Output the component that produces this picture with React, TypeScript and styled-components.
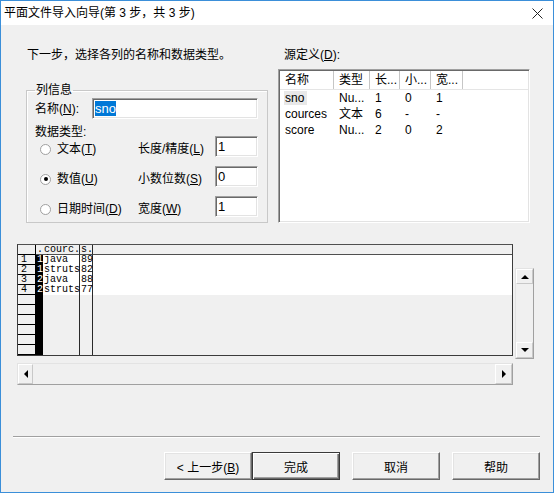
import React from 'react'
import styled, { createGlobalStyle } from 'styled-components'

const GlobalStyle = createGlobalStyle`
  html, body {
    margin: 0;
    padding: 0;
    background: #f0f0f0;
  }
  body {
    font-family: "Liberation Sans", "Noto Sans CJK SC", sans-serif;
    font-size: 12px;
    color: #000;
  }
  * {
    box-sizing: border-box;
  }
`

const Window = styled.div`
  width: 554px;
  height: 493px;
  border: 1px solid #3b8fd9;
  background: #f0f0f0;
  display: flex;
  flex-direction: column;
  overflow: hidden;
`

const TitleBar = styled.div`
  height: 24px;
  flex: none;
  background: #fff;
  display: flex;
  align-items: center;
  justify-content: space-between;
  padding-left: 3px;
`

const Title = styled.span`
  line-height: 16px;
`

const CloseBox = styled.div`
  width: 32px;
  height: 24px;
  display: flex;
  align-items: center;
  justify-content: center;
`

const TopSection = styled.div`
  display: flex;
  padding: 22px 0 0 25px;
`

const LeftColumn = styled.div`
  width: 242px;
  display: flex;
  flex-direction: column;
`

const RightColumn = styled.div`
  width: 252px;
  margin-left: 10px;
  display: flex;
  flex-direction: column;
`

const Caption = styled.div<{ $indent: number }>`
  line-height: 16px;
  height: 16px;
  padding-left: ${(p) => p.$indent}px;
  white-space: nowrap;
`

const GroupBox = styled.fieldset`
  margin: 19px 0 0 0;
  padding: 0 9px 5px 8px;
  border: 1px solid #c8c8c8;
  box-shadow: inset 1px 1px #fff;
  min-width: 0;
`

const GroupTitle = styled.legend`
  padding: 0 1px;
  line-height: 16px;
`

const NameRow = styled.div`
  display: flex;
  align-items: center;
  height: 21px;
`

const FieldLabel = styled.span<{ $width?: number }>`
  width: ${(p) => (p.$width ? `${p.$width}px` : 'auto')};
  line-height: 16px;
  white-space: nowrap;
`

const TextBox = styled.div<{ $width: number }>`
  width: ${(p) => p.$width}px;
  height: 21px;
  background: #fff;
  border-top: 1px solid #a0a0a0;
  border-left: 1px solid #a0a0a0;
  border-right: 1px solid #fff;
  border-bottom: 1px solid #fff;
  box-shadow: inset 1px 1px #696969, inset -1px -1px #e3e3e3;
  padding: 2px 0 0 2px;
  font-size: 13px;
  line-height: 16px;
`

const Selected = styled.span`
  background: #0078d7;
  color: #fff;
`

const SectionLabel = styled.div`
  margin-top: 7px;
  line-height: 12px;
  height: 12px;
`

const OptionsGrid = styled.div`
  margin-top: -2px;
  display: grid;
  grid-template-columns: 103px 77px 43px;
  grid-auto-rows: 21px;
  row-gap: 9px;
  align-items: end;
`

const RadioOption = styled.label`
  display: flex;
  align-items: center;
  padding-left: 5px;
  line-height: 16px;
  height: 16px;
  white-space: nowrap;
`

const RadioMark = styled.span<{ $checked?: boolean }>`
  width: 11px;
  height: 11px;
  border-radius: 50%;
  border: 1px solid #a0a0a0;
  background: #fff;
  margin-right: 6px;
  display: flex;
  align-items: center;
  justify-content: center;
  &::after {
    content: '';
    width: 4px;
    height: 4px;
    border-radius: 50%;
    background: ${(p) => (p.$checked ? '#000' : 'transparent')};
  }
`

const ListBox = styled.div`
  margin-top: 6px;
  height: 154px;
  background: #fff;
  border-top: 1px solid #a0a0a0;
  border-left: 1px solid #a0a0a0;
  border-right: 1px solid #fff;
  border-bottom: 1px solid #fff;
  box-shadow: inset 1px 1px #696969, inset -1px -1px #e3e3e3;
  padding: 1px;
`

const ListRow = styled.div<{ $header?: boolean }>`
  display: grid;
  grid-template-columns: 54px 36px 30px 31px 32px 1fr;
  height: ${(p) => (p.$header ? 19 : 16)}px;
  line-height: ${(p) => (p.$header ? 18 : 16)}px;
  border-bottom: ${(p) => (p.$header ? '1px solid #e5e5e5' : 'none')};
  font-size: 12px;
`

const ListCell = styled.div<{ $header?: boolean }>`
  padding-left: 5px;
  white-space: nowrap;
  overflow: hidden;
  border-right: ${(p) => (p.$header ? '1px solid #c6c6c6' : 'none')};
  &:last-child {
    border-right: none;
  }
`

const FocusText = styled.span`
  background: #e8e8e8;
  padding: 0 3px 0 1px;
  margin-left: -1px;
`

const GridArea = styled.div`
  display: flex;
  margin: 21px 0 0 16px;
`

const GridColumn = styled.div`
  display: flex;
  flex-direction: column;
`

const DataGrid = styled.div`
  width: 496px;
  height: 112px;
  border: 1px solid #3c3c3c;
  border-top-color: #505050;
  display: grid;
  grid-template-columns: 18px 7px 37px 13px 1fr;
  grid-template-rows: repeat(11, 10px);
  font-family: "Liberation Mono", monospace;
  font-size: 10px;
  line-height: 10px;
`

const RowHead = styled.div`
  background: #f0f0f0;
  border-right: 1px solid #000;
  border-bottom: 1px solid #000;
  padding-left: 3px;
`

const MarkCell = styled.div<{ $header?: boolean }>`
  background: ${(p) => (p.$header ? '#f0f0f0' : '#000')};
  color: ${(p) => (p.$header ? '#000' : '#fff')};
  border-bottom: ${(p) => (p.$header ? '1px solid #505050' : 'none')};
  padding-left: 1px;
`

const DataCell = styled.div<{ $header?: boolean; $filled?: boolean; $divider?: boolean }>`
  background: ${(p) => (p.$filled ? '#fff' : '#f0f0f0')};
  border-bottom: ${(p) => (p.$header ? '1px solid #505050' : 'none')};
  border-right: ${(p) => (p.$divider ? '1px solid #2a2a2a' : 'none')};
  padding-left: 1px;
  white-space: nowrap;
`

const ScrollTrack = styled.div<{ $vertical?: boolean }>`
  display: flex;
  flex-direction: ${(p) => (p.$vertical ? 'column' : 'row')};
  background: #f0f0f0;
  border-top: 1px solid #e3e3e3;
  border-left: 1px solid #e3e3e3;
  border-right: 1px solid #a0a0a0;
  border-bottom: 1px solid #a0a0a0;
`

const HScroll = styled(ScrollTrack)`
  width: 496px;
  height: 22px;
  margin-top: 7px;
`

const VScroll = styled(ScrollTrack)`
  width: 19px;
  height: 91px;
  margin: 24px 0 0 2px;
`

const ScrollButton = styled.div<{ $w: number; $h: number }>`
  width: ${(p) => p.$w}px;
  height: ${(p) => p.$h}px;
  flex: none;
  display: flex;
  align-items: center;
  justify-content: center;
  border-top: 1px solid #fff;
  border-left: 1px solid #fff;
  border-right: 1px solid #c8c8c8;
  border-bottom: 1px solid #c8c8c8;
`

const ScrollFill = styled.div`
  flex: 1;
`

const Separator = styled.div`
  margin: 51px 13px 0 12px;
  height: 2px;
  border-top: 1px solid #a0a0a0;
  border-bottom: 1px solid #fff;
`

const ButtonRow = styled.div`
  display: flex;
  justify-content: flex-end;
  margin-top: 14px;
  padding-right: 13px;
`

const PushButton = styled.button<{ $default?: boolean; $gap?: number }>`
  width: 88px;
  height: 28px;
  margin: 0 0 0 ${(p) => p.$gap ?? 0}px;
  padding: 0;
  background: #f0f0f0;
  font-family: "Liberation Sans", "Noto Sans CJK SC", sans-serif;
  font-size: 12px;
  color: #000;
  border: 1px solid;
  border-color: ${(p) =>
    p.$default ? '#3a3a3a' : '#ffffff #696969 #696969 #ffffff'};
  box-shadow: ${(p) =>
    p.$default
      ? 'inset 1px 1px #fff, inset -1px -1px #696969, inset -2px -2px #a0a0a0'
      : 'inset -1px -1px #a0a0a0, inset 1px 1px #e3e3e3'};
`

const Arrow: React.FC<{ dir: 'up' | 'down' | 'left' | 'right' }> = ({ dir }) => {
  const points = {
    up: '0,4 4,0 8,4',
    down: '0,0 8,0 4,4',
    left: '4,0 4,8 0,4',
    right: '0,0 0,8 4,4',
  }[dir]
  const vertical = dir === 'up' || dir === 'down'
  return (
    <svg width={vertical ? 8 : 4} height={vertical ? 4 : 8} viewBox={vertical ? '0 0 8 4' : '0 0 4 8'}>
      <polygon points={points} fill="#000" />
    </svg>
  )
}

const columns = [
  { name: 'sno', type: 'Nu...', len: '1', dec: '0', width: '1' },
  { name: 'cources', type: '文本', len: '6', dec: '-', width: '-' },
  { name: 'score', type: 'Nu...', len: '2', dec: '0', width: '2' },
]

const previewRows = [
  ['1', 'java', '89'],
  ['1', 'struts', '82'],
  ['2', 'java', '88'],
  ['2', 'struts', '77'],
]

const App: React.FC = () => {
  const gridRows = Array.from({ length: 10 }, (_, i) => previewRows[i])

  return (
    <>
      <GlobalStyle />
      <Window>
        <TitleBar>
          <Title>平面文件导入向导(第 3 步，共 3 步)</Title>
          <CloseBox>
            <svg width="11" height="11" viewBox="0 0 11 11">
              <path d="M0.5 0.5 L10.5 10.5 M10.5 0.5 L0.5 10.5" stroke="#222" strokeWidth="1" />
            </svg>
          </CloseBox>
        </TitleBar>

        <TopSection>
          <LeftColumn>
            <Caption $indent={1}>下一步，选择各列的名称和数据类型。</Caption>
            <GroupBox>
              <GroupTitle>列信息</GroupTitle>
              <NameRow>
                <FieldLabel $width={57}>
                  名称(<u>N</u>):
                </FieldLabel>
                <TextBox $width={166}>
                  <Selected>sno</Selected>
                </TextBox>
              </NameRow>
              <SectionLabel>数据类型:</SectionLabel>
              <OptionsGrid>
                <RadioOption>
                  <RadioMark />
                  文本(<u>T</u>)
                </RadioOption>
                <FieldLabel>
                  长度/精度(<u>L</u>)
                </FieldLabel>
                <TextBox $width={43}>1</TextBox>

                <RadioOption>
                  <RadioMark $checked />
                  数值(<u>U</u>)
                </RadioOption>
                <FieldLabel>
                  小数位数(<u>S</u>)
                </FieldLabel>
                <TextBox $width={43}>0</TextBox>

                <RadioOption>
                  <RadioMark />
                  日期时间(<u>D</u>)
                </RadioOption>
                <FieldLabel>
                  宽度(<u>W</u>)
                </FieldLabel>
                <TextBox $width={43}>1</TextBox>
              </OptionsGrid>
            </GroupBox>
          </LeftColumn>

          <RightColumn>
            <Caption $indent={6}>
              源定义(<u>D</u>):
            </Caption>
            <ListBox>
              <ListRow $header>
                <ListCell $header>名称</ListCell>
                <ListCell $header>类型</ListCell>
                <ListCell $header>长...</ListCell>
                <ListCell $header>小...</ListCell>
                <ListCell $header>宽...</ListCell>
                <ListCell />
              </ListRow>
              {columns.map((col, index) => (
                <ListRow key={col.name}>
                  <ListCell>{index === 0 ? <FocusText>{col.name}</FocusText> : col.name}</ListCell>
                  <ListCell>{col.type}</ListCell>
                  <ListCell>{col.len}</ListCell>
                  <ListCell>{col.dec}</ListCell>
                  <ListCell>{col.width}</ListCell>
                  <ListCell />
                </ListRow>
              ))}
            </ListBox>
          </RightColumn>
        </TopSection>

        <GridArea>
          <GridColumn>
            <DataGrid>
              <RowHead />
              <MarkCell $header>.</MarkCell>
              <DataCell $header $divider>courc.</DataCell>
              <DataCell $header $divider>s.</DataCell>
              <DataCell $header />
              {gridRows.map((row, i) => (
                <React.Fragment key={i}>
                  <RowHead>{row ? i + 1 : ''}</RowHead>
                  <MarkCell>{row ? row[0] : ''}</MarkCell>
                  <DataCell $filled={!!row} $divider>
                    {row ? row[1] : ''}
                  </DataCell>
                  <DataCell $filled={!!row} $divider>
                    {row ? row[2] : ''}
                  </DataCell>
                  <DataCell $filled={!!row} />
                </React.Fragment>
              ))}
            </DataGrid>
            <HScroll>
              <ScrollButton $w={15} $h={20}>
                <Arrow dir="left" />
              </ScrollButton>
              <ScrollFill />
              <ScrollButton $w={17} $h={20}>
                <Arrow dir="right" />
              </ScrollButton>
            </HScroll>
          </GridColumn>
          <VScroll $vertical>
            <ScrollButton $w={17} $h={15}>
              <Arrow dir="up" />
            </ScrollButton>
            <ScrollFill />
            <ScrollButton $w={17} $h={16}>
              <Arrow dir="down" />
            </ScrollButton>
          </VScroll>
        </GridArea>

        <Separator />

        <ButtonRow>
          <PushButton>
            &lt; 上一步(<u>B</u>)
          </PushButton>
          <PushButton $default>完成</PushButton>
          <PushButton $gap={12}>取消</PushButton>
          <PushButton $gap={12}>帮助</PushButton>
        </ButtonRow>
      </Window>
    </>
  )
}

export default App
